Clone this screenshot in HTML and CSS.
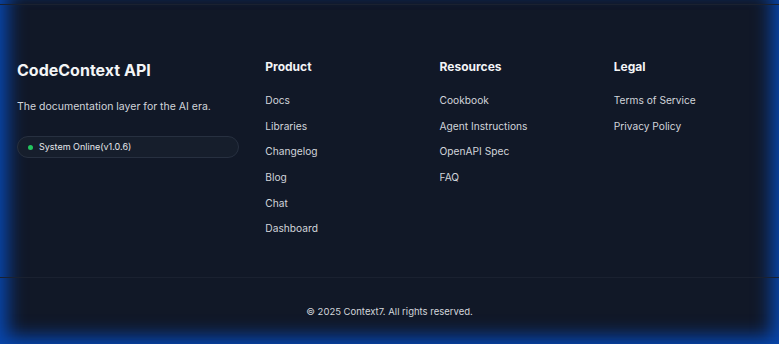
FILE: index.html
```html
<!DOCTYPE html>
<html lang="en">
<head>
<meta charset="utf-8">
<title>CodeContext API</title>
<link rel="stylesheet" href="styles.css">
</head>
<body>
<div class="page">
  <footer class="footer">
    <div class="footer-grid">
      <div class="brand">
        <h2 class="brand-title">CodeContext API</h2>
        <p class="brand-desc">The documentation layer for the AI era.</p>
        <div class="status">
          <span class="status-dot"></span>
          <span class="status-text">System Online(v1.0.6)</span>
        </div>
      </div>
      <div class="col">
        <h3 class="col-title">Product</h3>
        <ul class="links">
          <li><a href="#">Docs</a></li>
          <li><a href="#">Libraries</a></li>
          <li><a href="#">Changelog</a></li>
          <li><a href="#">Blog</a></li>
          <li><a href="#">Chat</a></li>
          <li><a href="#">Dashboard</a></li>
        </ul>
      </div>
      <div class="col">
        <h3 class="col-title">Resources</h3>
        <ul class="links">
          <li><a href="#">Cookbook</a></li>
          <li><a href="#">Agent Instructions</a></li>
          <li><a href="#">OpenAPI Spec</a></li>
          <li><a href="#">FAQ</a></li>
        </ul>
      </div>
      <div class="col">
        <h3 class="col-title">Legal</h3>
        <ul class="links">
          <li><a href="#">Terms of Service</a></li>
          <li><a href="#">Privacy Policy</a></li>
        </ul>
      </div>
    </div>
    <div class="footer-bottom">
      <p class="copyright">© 2025 Context7. All rights reserved.</p>
    </div>
  </footer>
</div>
</body>
</html>
```
FILE: styles.css
```css
* { box-sizing: border-box; }
html, body { margin: 0; padding: 0; }
body {
  background: #111827;
  font-family: Inter, "Noto Sans", "Liberation Sans", sans-serif;
  color: #e5e7eb;
}
.page {
  min-height: 100vh;
  padding-top: 4px;
  background: #111827;
  box-shadow:
    inset 20px 0 18px -12px #0946ab,
    inset -20px 0 18px -12px #0946ab,
    inset 0 -20px 18px -12px #0946ab;
}
.footer {
  border-top: 1px solid #1a2130;
}
.footer-grid {
  display: grid;
  grid-template-columns: 1.5fr 1fr 1fr 1fr;
  column-gap: 26px;
  padding: 54px 17px 42px;
  align-items: start;
}
.brand-title {
  margin: 1px 0 0;
  font-size: 16px;
  line-height: 20px;
  font-weight: 700;
  color: #f3f4f6;
}
.brand-desc {
  margin: 20px 0 0;
  font-size: 10.5px;
  line-height: 14px;
  color: #d1d5db;
}
.status {
  margin-top: 22px;
  height: 22px;
  display: flex;
  align-items: center;
  gap: 6px;
  padding: 0 10px;
  border: 1px solid #273040;
  border-radius: 11px;
  background: #161e2c;
}
.status-dot {
  width: 5px;
  height: 5px;
  border-radius: 50%;
  background: #22c55e;
}
.status-text {
  font-size: 9px;
  line-height: 12px;
  color: #e5e7eb;
}
.col-title {
  margin: 0;
  font-size: 12px;
  line-height: 16px;
  font-weight: 700;
  color: #f3f4f6;
}
.links {
  list-style: none;
  margin: 18px 0 0;
  padding: 0;
  display: flex;
  flex-direction: column;
  gap: 11.7px;
}
.links li {
  font-size: 10.2px;
  line-height: 14px;
}
.links a {
  color: #d1d5db;
  text-decoration: none;
}
.footer-bottom {
  border-top: 1px solid #1a2130;
  padding-top: 28px;
  display: flex;
  justify-content: center;
}
.copyright {
  margin: 0;
  font-size: 9.5px;
  line-height: 12px;
  color: #d1d5db;
}
```
